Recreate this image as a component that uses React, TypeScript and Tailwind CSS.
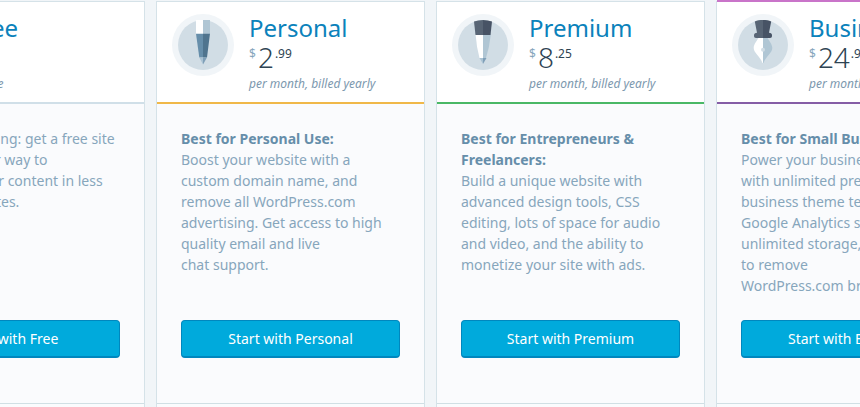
import React from 'react';

interface Plan {
  id: string;
  name: string;
  price?: { whole: string; cents: string };
  term: string;
  accent: string;
  lead?: string;
  description: string[];
  popular?: boolean;
}

const PLANS: Plan[] = [
  {
    id: 'free',
    name: 'Free',
    term: 'for life',
    accent: 'border-[#d0dfe8]',
    description: [
      'Start for blogging: get a free site',
      'and be on your way to',
      'publishing your content in less',
      'than five minutes.',
    ],
  },
  {
    id: 'personal',
    name: 'Personal',
    price: { whole: '2', cents: '.99' },
    term: 'per month, billed yearly',
    accent: 'border-[#f0b849]',
    lead: 'Best for Personal Use:',
    description: [
      'Boost your website with a',
      'custom domain name, and',
      'remove all WordPress.com',
      'advertising. Get access to high',
      'quality email and live',
      'chat support.',
    ],
  },
  {
    id: 'premium',
    name: 'Premium',
    price: { whole: '8', cents: '.25' },
    term: 'per month, billed yearly',
    accent: 'border-[#4ab866]',
    lead: 'Best for Entrepreneurs & Freelancers:',
    description: [
      'Build a unique website with',
      'advanced design tools, CSS',
      'editing, lots of space for audio',
      'and video, and the ability to',
      'monetize your site with ads.',
    ],
  },
  {
    id: 'business',
    name: 'Business',
    price: { whole: '24', cents: '.92' },
    term: 'per month, billed yearly',
    accent: 'border-[#855da6]',
    lead: 'Best for Small Business:',
    description: [
      'Power your business website',
      'with unlimited premium and',
      'business theme templates,',
      'Google Analytics support,',
      'unlimited storage, and ability',
      'to remove',
      'WordPress.com branding.',
    ],
    popular: true,
  },
];

const PlanIcon = ({ id }: { id: string }) => {
  const getShape = () => {
    switch (id) {
      case 'personal':
        return (
          <>
            <path d="M24 6h7v14h-7z" fill="#fff" />
            <path d="M31 6h7v14h-7z" fill="#b0c6d4" />
            <path d="M24 19.7h7v23.8h-3.7z" fill="#668eaa" />
            <path d="M31 19.7h7l-3 23.8h-4z" fill="#4f748e" />
            <path d="M27.3 43.5H31v7z" fill="#a9c2d3" />
            <path d="M31 43.5h4l-4 7z" fill="#7f9fb8" />
          </>
        );
      case 'premium':
        return (
          <>
            <path d="M23.6 20.5H31V44h-3.5Q24.5 33 23.6 20.5z" fill="#fff" />
            <path d="M31 20.5h7.8Q37.5 33 34 44h-3z" fill="#b0c6d4" />
            <path d="M22 7.5Q26 6 31 6v15h-7.5z" fill="#586575" />
            <path d="M31 6q5 0 9 1.5L38.5 21H31z" fill="#475365" />
            <path d="M27.5 44H31v6z" fill="#a9c2d3" />
            <path d="M31 44h3.5L31 50z" fill="#7f9fb8" />
          </>
        );
      case 'business':
        return (
          <>
            <path d="M31 23h-4c-2 4-5.3 7-5.3 11C21.7 39 28 42 30.5 49h.5z" fill="#fff" />
            <path d="M31 23h4c2 4 5.3 7 5.3 11C40.3 39 34 42 31.5 49H31z" fill="#b0c6d4" />
            <circle cx="31" cy="35.7" r="2" fill="#d1dde5" />
            <path d="M31 6c-3 0-6 .3-8.2 1.5L25 18.7c-2 0-3 1-3 2.8S22.7 24 24 24h7z" fill="#586575" />
            <path d="M31 6c3 0 6 .3 8.2 1.5L37 18.7c2 0 3 1 3 2.8S39.3 24 38 24h-7z" fill="#475365" />
          </>
        );
      default:
        return <path d="M26 8h10v30l-5 12-5-12z" fill="#fff" />;
    }
  };

  return (
    <svg className="size-[62px] shrink-0" viewBox="0 0 62 62" aria-hidden="true">
      <circle cx="31" cy="31" r="31" fill="#f1f5f8" />
      <circle cx="31" cy="31" r="25" fill="#d1dde5" />
      {getShape()}
    </svg>
  );
};

const PlanCard = ({ plan }: { plan: Plan }) => (
  <section className="relative w-[269px] shrink-0 border border-[#d5e2e8] bg-[#fafbfd]">
    {plan.popular && <div className="absolute inset-x-0 -top-px h-[2px] -translate-y-px bg-[#c974c9]" />}

    {/* Name and price */}
    <header className={`flex h-[102px] gap-[15px] border-b-2 bg-white px-[15px] pt-3 ${plan.accent}`}>
      <PlanIcon id={plan.id} />
      <div className="whitespace-nowrap">
        <h2 className="text-[24px] leading-[28px] text-[#0b82bb]">{plan.name}</h2>
        <div className="flex h-8 items-start text-[#2e4453]">
          {plan.price && (
            <>
              <sup className="top-0 pt-1 text-[12px] leading-[16px] text-[#87a6bc]">$</sup>
              <span className="pl-[2px] text-[28px] leading-[30px] font-light">{plan.price.whole}</span>
              <sup className="top-0 pt-1 pl-px text-[12px] leading-[16px]">{plan.price.cents}</sup>
            </>
          )}
        </div>
        <p className="text-[12px] leading-[20px] text-[#7c98ae] italic">{plan.term}</p>
      </div>
    </header>

    {/* Pitch */}
    <div className="px-6 pt-6 pb-[45px]">
      <p className="min-h-[192px] text-[14px] leading-[21px] text-[#87a6bc]">
        {plan.lead && <strong className="block font-bold text-[#668eaa]">{plan.lead}</strong>}
        {plan.description.map((line) => (
          <span key={line} className="block whitespace-nowrap">{line}</span>
        ))}
      </p>
      <button
        type="button"
        className="h-[38px] w-full rounded-[4px] border border-b-2 border-[#0087be] bg-[#00aadc] text-[14px] leading-[21px] text-white"
      >
        Start with {plan.name}
      </button>
    </div>

    <div className="h-6 border-t border-[#d0dfe4]" />
  </section>
);

const App: React.FC = () => (
  <main className="flex h-screen items-start justify-center gap-[11px] overflow-hidden bg-[#f1f5f8] pt-px pl-px font-['Noto_Sans',sans-serif]">
    {PLANS.map((plan) => (
      <PlanCard key={plan.id} plan={plan} />
    ))}
  </main>
);

export default App;
